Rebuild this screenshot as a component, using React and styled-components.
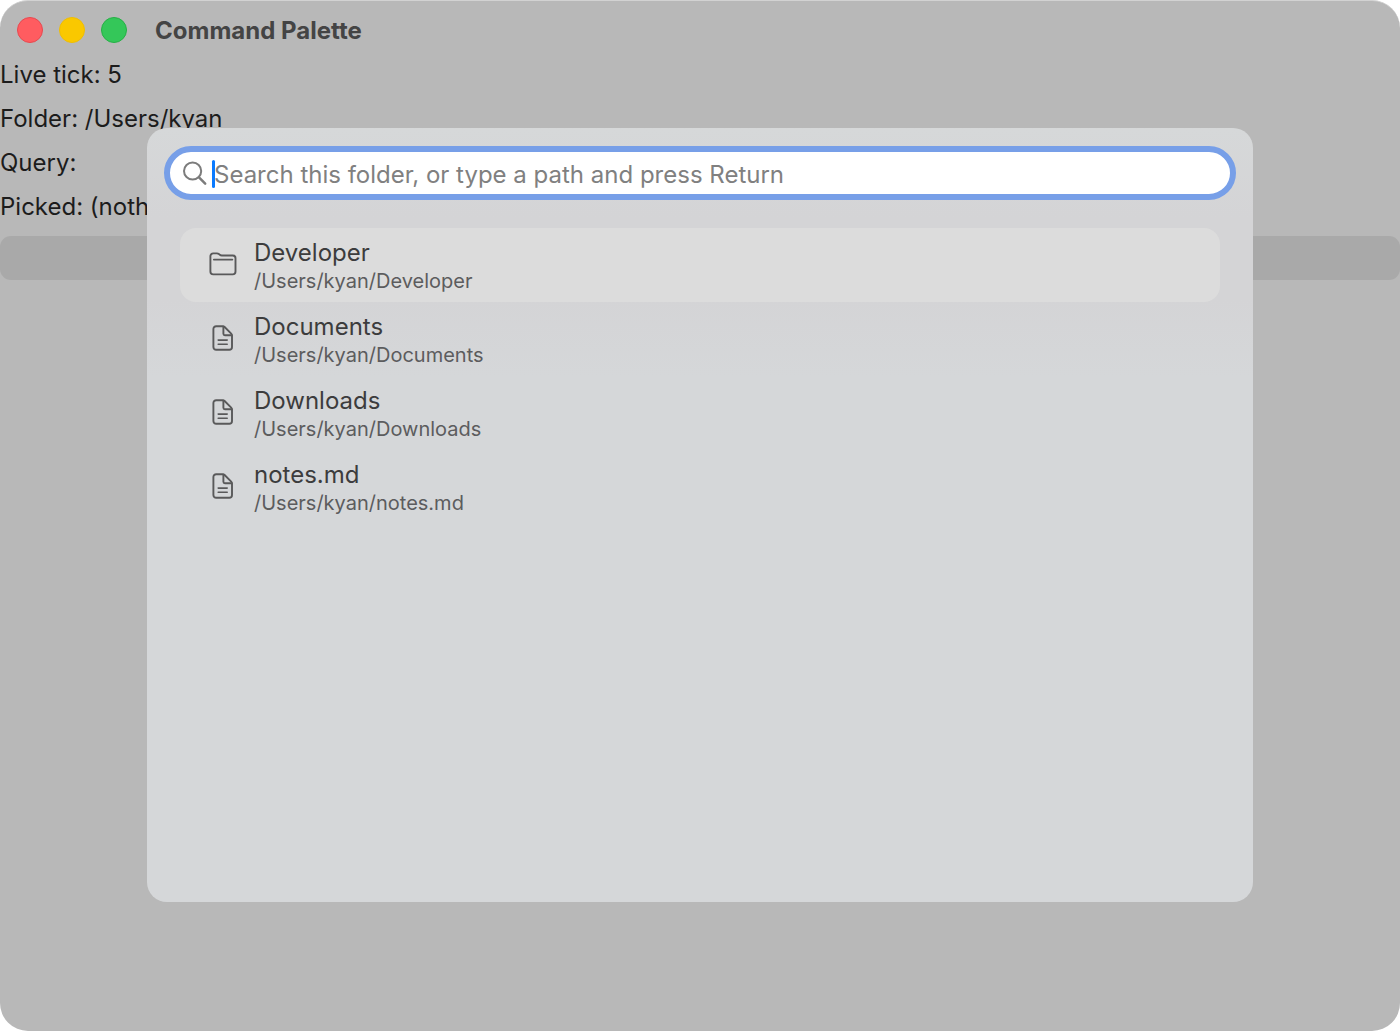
import React, { useState } from "react";
import styled, { createGlobalStyle } from "styled-components";

const GlobalStyle = createGlobalStyle`
  * {
    box-sizing: border-box;
  }
  body {
    margin: 0;
    background: #ffffff;
    font-family: Inter, "Liberation Sans", sans-serif;
    font-size: 24px;
    line-height: 29px;
    color: #1c1c1c;
  }
`;

const Window = styled.div`
  position: relative;
  min-height: 100vh;
  background: #b8b8b8;
  border-top: 1px solid #d2d2d2;
  border-radius: 28px;
  overflow: hidden;
`;

const TitleBar = styled.header`
  display: flex;
  align-items: center;
  height: 59px;
  padding: 0 17px;
`;

const Lights = styled.div`
  display: flex;
  gap: 16px;
  margin-right: 28px;
  padding-bottom: 2px;
`;

const Light = styled.button`
  width: 26px;
  height: 26px;
  padding: 0;
  border: 1px solid ${(props) => props.$edge};
  border-radius: 50%;
  background: ${(props) => props.$color};
`;

const Title = styled.h1`
  margin: 0;
  font-size: 24px;
  font-weight: 700;
  color: #444444;
`;

const Content = styled.main`
  display: flex;
  flex-direction: column;
  gap: 15px;
`;

const Line = styled.p`
  margin: 0;
`;

const OpenButton = styled.button`
  width: 100%;
  height: 44px;
  border: none;
  border-radius: 11px;
  background: #a9a9a9;
`;

const Overlay = styled.div`
  position: absolute;
  inset: 0;
  display: flex;
  justify-content: center;
  padding: 127px 0 129px;
`;

const Palette = styled.section`
  width: 79%;
  padding: 18px 17px;
  border-radius: 20px;
  background: linear-gradient(#d6d8d9 0, #d4d4d6 90px, #d4d4d6 170px, #d5d7d9 250px);
`;

const SearchField = styled.label`
  display: flex;
  align-items: center;
  height: 54px;
  padding: 0 16px 0 12px;
  border: 6px solid #779fe8;
  border-radius: 27px;
  background: #ffffff;
`;

const InputWrap = styled.div`
  position: relative;
  flex: 1;
  display: flex;
  margin-left: 4px;
  padding-top: 2px;
`;

const SearchInput = styled.input`
  flex: 1;
  min-width: 0;
  padding: 0 0 0 2px;
  border: none;
  outline: none;
  background: transparent;
  font: inherit;
  color: #262626;
  caret-color: transparent;
  &::placeholder {
    color: #808080;
    opacity: 1;
  }
`;

const Caret = styled.span`
  position: absolute;
  left: 0;
  top: 2px;
  width: 3px;
  height: 28px;
  border-radius: 2px;
  background: #0a7aff;
`;

const List = styled.ul`
  display: flex;
  flex-direction: column;
  margin: 28px 0 0;
  padding: 0 16px;
  list-style: none;
`;

const Row = styled.button`
  display: flex;
  align-items: center;
  width: 100%;
  height: 74px;
  padding: 0 27px;
  border: none;
  border-radius: 16px;
  background: ${(props) => (props.$selected ? "#dcdcdc" : "transparent")};
  font: inherit;
  text-align: left;
`;

const IconBox = styled.span`
  display: flex;
  justify-content: center;
  width: 32px;
  margin-right: 15px;
  padding-bottom: 2px;
`;

const Texts = styled.span`
  display: flex;
  flex-direction: column;
  padding-top: 4px;
`;

const Name = styled.span`
  color: #3c3c3d;
`;

const Path = styled.span`
  font-size: 20px;
  color: #5c5c5e;
`;

function SearchIcon() {
  return (
    <svg width="26" height="26" viewBox="0 0 26 26" fill="none" stroke="#7c7c7c" strokeLinecap="round">
      <circle cx="10.6" cy="11" r="8.6" strokeWidth="2" />
      <path d="M17 17.4l6.2 6.2" strokeWidth="2.5" />
    </svg>
  );
}

function FolderIcon() {
  return (
    <svg width="28" height="24" viewBox="0 0 28 24" fill="none" stroke="#59595a" strokeWidth="1.9" strokeLinecap="round" strokeLinejoin="round">
      <path d="M1.4 4.2a2.8 2.8 0 0 1 2.8-2.8h3.7c.9 0 1.4.2 2 .7l.9.7c.6.5 1.1.7 1.9.7h11a2.8 2.8 0 0 1 2.8 2.8v13.3a2.8 2.8 0 0 1-2.8 2.8H4.200a2.800 2.800 0 0 1-2.800-2.800z" />
      <path d="M4.8 7.6h18.600" strokeWidth="1.7" />
    </svg>
  );
}

function FileIcon() {
  return (
    <svg width="22" height="26" viewBox="0 0 22 26" fill="none" stroke="#59595a" strokeWidth="1.9" strokeLinecap="round" strokeLinejoin="round">
      <path d="M4.2 1.2h6.400c.8 0 1.4.2 2 .8l6.600 6.700c.6.6.8 1.200.8 2V22a2.800 2.800 0 0 1-2.800 2.800h-13A2.800 2.800 0 0 1 1.400 22V4a2.800 2.800 0 0 1 2.800-2.800z" />
      <path d="M11.400 1.700v7c0 1 .5 1.500 1.500 1.500h6.800" />
      <path d="M6.200 15.100h9M6.200 19.300h9" strokeWidth="1.6" />
    </svg>
  );
}

const items = [
  { name: "Developer", folder: true },
  { name: "Documents" },
  { name: "Downloads" },
  { name: "notes.md" },
];

function App() {
  const [query, setQuery] = useState("");
  const [selected, setSelected] = useState(0);

  return (
    <>
      <GlobalStyle />
      <Window>
        <TitleBar>
          <Lights>
            <Light $color="#ff5c60" $edge="#e8484f" aria-label="Close" />
            <Light $color="#fac800" $edge="#f0be00" aria-label="Minimize" />
            <Light $color="#34c759" $edge="#25b045" aria-label="Zoom" />
          </Lights>
          <Title>Command Palette</Title>
        </TitleBar>
        <Content>
          <Line>Live tick: 5</Line>
          <Line>Folder: /Users/kyan</Line>
          <Line>Query: {query}</Line>
          <Line>Picked: (nothing)</Line>
          <OpenButton aria-label="Open palette" />
        </Content>
        <Overlay>
          <Palette>
            <SearchField htmlFor="palette-search">
              <SearchIcon />
              <InputWrap>
                <SearchInput
                  id="palette-search"
                  aria-label="Search"
                  placeholder="Search this folder, or type a path and press Return"
                  value={query}
                  onChange={(e) => setQuery(e.target.value)}
                />
                {query === "" && <Caret />}
              </InputWrap>
            </SearchField>
            <List>
              {items.map((item, i) => (
                <li key={item.name}>
                  <Row $selected={i === selected} onClick={() => setSelected(i)}>
                    <IconBox>{item.folder ? <FolderIcon /> : <FileIcon />}</IconBox>
                    <Texts>
                      <Name>{item.name}</Name>
                      <Path>/Users/kyan/{item.name}</Path>
                    </Texts>
                  </Row>
                </li>
              ))}
            </List>
          </Palette>
        </Overlay>
      </Window>
    </>
  );
}

export default App;
